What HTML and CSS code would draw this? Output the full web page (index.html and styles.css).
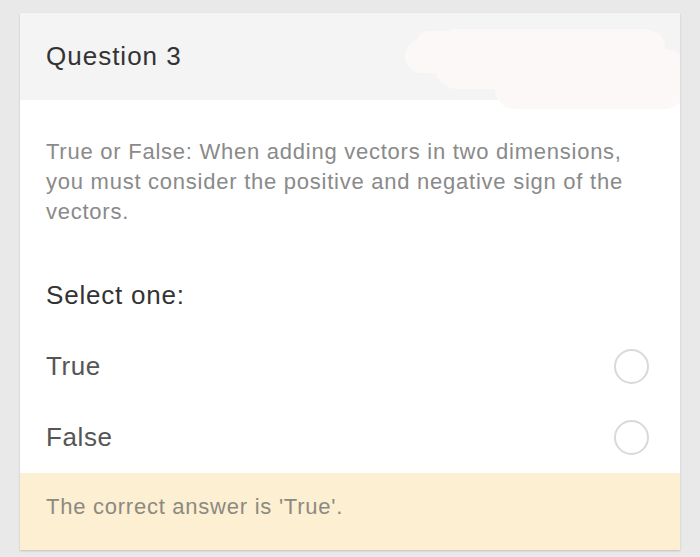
FILE: index.html
```html
<!DOCTYPE html>
<html>
<head>
<meta charset="utf-8">
<link rel="stylesheet" href="styles.css">
</head>
<body>
<div class="card">
  <div class="header">
    <h2 class="title">Question 3</h2>
    <svg class="redact" width="280" height="92" viewBox="0 0 280 92">
      <rect x="0" y="20" width="120" height="34" rx="17" fill="#fdf8f8"/>
      <rect x="10" y="12" width="250" height="30" rx="15" fill="#fdf8f8"/>
      <rect x="30" y="10" width="230" height="60" rx="22" fill="#fdf8f8"/>
      <rect x="90" y="50" width="190" height="40" rx="20" fill="#fdf8f8"/>
      <rect x="60" y="30" width="220" height="40" rx="20" fill="#fdf8f8"/>
    </svg>
  </div>
  <div class="content">
    <p class="question">True or False: When adding vectors in two dimensions, you must consider the positive and negative sign of the vectors.</p>
    <p class="prompt">Select one:</p>
    <div class="options">
      <label class="option"><span class="opt-label">True</span><span class="radio"></span></label>
      <label class="option"><span class="opt-label">False</span><span class="radio"></span></label>
    </div>
  </div>
  <div class="feedback">The correct answer is 'True'.</div>
</div>
</body>
</html>
```
FILE: styles.css
```css
html, body { margin: 0; padding: 0; }
body {
  background: #e9e9e9;
  padding: 13px 20px 0 20px;
  font-family: "Liberation Sans", Arial, sans-serif;
  height: 557px;
  box-sizing: border-box;
}
.card {
  width: 660px;
  background: #fff;
  box-shadow: 0 1px 2px rgba(0,0,0,0.18);
  overflow: hidden;
}
.header {
  position: relative;
  height: 87px;
  background: #f4f4f4;
  display: flex;
  align-items: center;
  padding-left: 26px;
}
.title {
  margin: 0;
  font-weight: normal;
  font-size: 26px;
  color: #333;
  letter-spacing: 1px;
}
.redact {
  position: absolute;
  left: 385px;
  top: 6px;
}
.content {
  padding: 37px 26px 0 26px;
}
.question {
  margin: 0;
  font-size: 22px;
  line-height: 30px;
  letter-spacing: 0.75px;
  color: #8a8a8a;
  width: 600px;
}
.prompt {
  margin: 50px 0 0 0;
  font-size: 26px;
  line-height: 36px;
  letter-spacing: 0.8px;
  color: #333;
}
.options {
  margin-top: 18px;
  display: flex;
  flex-direction: column;
}
.option {
  height: 71px;
  display: flex;
  align-items: center;
  justify-content: space-between;
  padding-right: 5px;
}
.opt-label {
  font-size: 26px;
  letter-spacing: 0.6px;
  color: #555;
}
.radio {
  width: 31px;
  height: 31px;
  border: 2px solid #d9d9d9;
  border-radius: 50%;
}
.feedback {
  background: #fcefd2;
  height: 77px;
  box-sizing: border-box;
  padding: 19px 26px 0 26px;
  font-size: 22px;
  line-height: 30px;
  letter-spacing: 0.75px;
  color: #8c8a80;
}
```
